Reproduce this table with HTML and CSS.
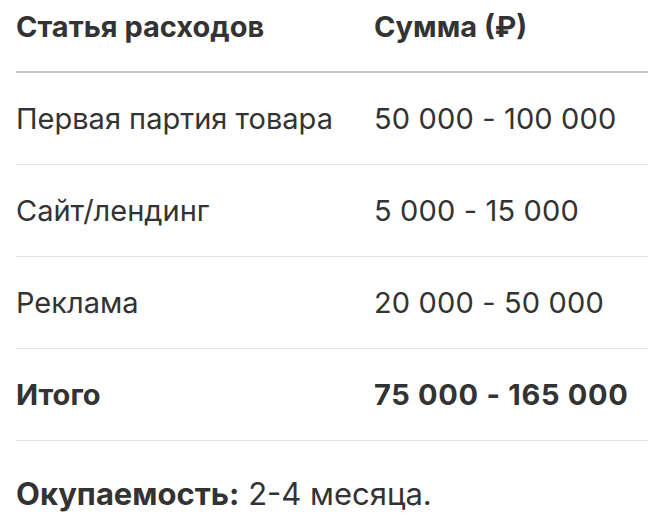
FILE: index.html
```html
<!DOCTYPE html>
<html lang="ru">
<head>
<meta charset="utf-8">
<link rel="stylesheet" href="styles.css">
</head>
<body>
<div class="page">
  <table class="costs">
    <thead>
      <tr><th class="c1">Статья расходов</th><th class="c2">Сумма (₽)</th></tr>
    </thead>
    <tbody>
      <tr><td class="c1">Первая партия товара</td><td class="c2">50 000 - 100 000</td></tr>
      <tr><td class="c1">Сайт/лендинг</td><td class="c2">5 000 - 15 000</td></tr>
      <tr><td class="c1">Реклама</td><td class="c2">20 000 - 50 000</td></tr>
      <tr class="total"><td class="c1">Итого</td><td class="c2">75 000 - 165 000</td></tr>
    </tbody>
  </table>
  <p class="note"><strong>Окупаемость:</strong> 2-4 месяца.</p>
</div>
</body>
</html>
```

FILE: styles.css
```css
html, body {
  margin: 0;
  padding: 0;
  background: #ffffff;
}
body {
  font-family: "Inter", "Liberation Sans", Arial, sans-serif;
  color: #333333;
  font-size: 29px;
}
.page {
  padding: 0 23px 0 16px;
}
.costs {
  width: 632px;
  border-collapse: collapse;
}
.costs th, .costs td {
  text-align: left;
  padding: 0;
  line-height: 40px;
  white-space: nowrap;
}
.costs th {
  font-weight: 700;
  padding-top: 7px;
  padding-bottom: 24px;
  border-bottom: 2px solid #c4c4c4;
}
.costs td {
  padding-top: 26px;
  padding-bottom: 25px;
  border-bottom: 1px solid #e2e2e2;
}
.costs td.c2 {
  letter-spacing: 0.15px;
}
.c1 { width: 358px; }
.total td { font-weight: 700; }
.total td.c2 { letter-spacing: 0.7px; }
.note {
  margin: 33px 0 0 0;
  font-size: 31px;
  line-height: 40px;
}
.note strong { font-weight: 700; }
```
